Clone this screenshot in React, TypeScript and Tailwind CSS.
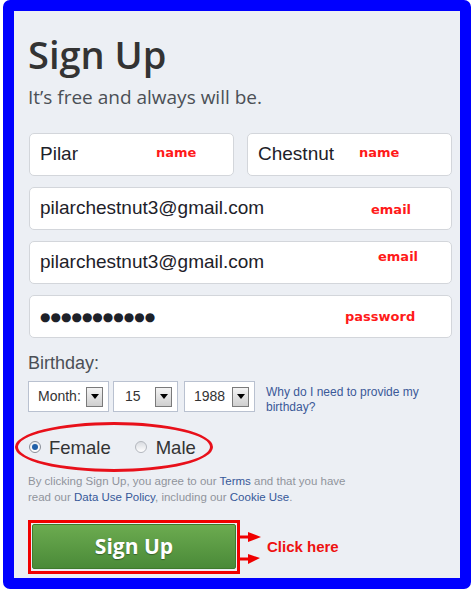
import React from "react";

const sans = { fontFamily: '"Liberation Sans", Arial, sans-serif' };
const open = { fontFamily: '"Open Sans", "Liberation Sans", sans-serif' };
const dv = { fontFamily: '"DejaVu Sans", Verdana, sans-serif' };

function Note({ text, className }: { text: string; className: string }) {
  return (
    <span
      className={"absolute text-[13px] font-bold leading-none text-[#ff1a1a] " + className}
      style={dv}
    >
      {text}
    </span>
  );
}

function Field({ children, note }: { children: React.ReactNode; note?: React.ReactNode }) {
  return (
    <div
      className="relative flex h-[43px] items-center rounded-[5px] border border-[#d3d6db] bg-white pl-[10px] text-[19px] text-[#1d2129]"
      style={sans}
    >
      {children}
      {note}
    </div>
  );
}

function Arrow() {
  return (
    <div className="flex h-[20px] w-[17px] items-center justify-center border border-[#7a7a7a] bg-gradient-to-b from-[#f4f4f4] to-[#cfcfcf]">
      <svg width="8" height="5" viewBox="0 0 8 5">
        <path d="M0 0 L8 0 L4 5 Z" fill="#000" />
      </svg>
    </div>
  );
}

function Select({ label, w, pl }: { label: string; w: string; pl: string }) {
  return (
    <div
      className={"flex h-[31px] items-center justify-between border border-[#b9c1d0] bg-white pr-[5px] text-[14px] text-[#333] " + w + " " + pl}
      style={sans}
    >
      <span>{label}</span>
      <Arrow />
    </div>
  );
}

export default function App() {
  return (
    <div className="h-[591px] w-[474px] bg-white">
      <div className="ml-[3px] h-[589px] w-[468px] rounded-[7px] border-[11px] border-[#0000ff] bg-[#eceff4] pl-[14px] pr-[8px] pt-[24px]">
        <h1 className="text-[38px] font-semibold leading-[38px] text-[#333]" style={open}>
          Sign Up
        </h1>
        <p className="mt-[12px] text-[19px] leading-[24px] text-[#4b4f56]" style={open}>
          It’s free and always will be.
        </p>

        <div className="ml-[1px] mt-[24px] flex flex-col gap-[11px]">
          <div className="flex gap-[13px]">
            <div className="flex-1">
              <Field note={<Note text="name" className="left-[126px] top-[12px]" />}>Pilar</Field>
            </div>
            <div className="flex-1">
              <Field note={<Note text="name" className="left-[111px] top-[12px]" />}>Chestnut</Field>
            </div>
          </div>
          <Field note={<Note text="email" className="left-[341px] top-[15px]" />}>pilarchestnut3@gmail.com</Field>
          <Field note={<Note text="email" className="left-[348px] top-[8px]" />}>pilarchestnut3@gmail.com</Field>
          <Field note={<Note text="password" className="left-[315px] top-[14px]" />}>
            <span className="text-[12px] tracking-[0px]" style={dv}>
              ●●●●●●●●●●●
            </span>
          </Field>
        </div>

        <div className="mt-[14px] text-[18px] leading-[22px] text-[#4b4f56]" style={sans}>
          Birthday:
        </div>

        <div className="mt-[7px] flex items-start">
          <Select label="Month:" w="w-[81px]" pl="pl-[9px]" />
          <div className="ml-[4px]">
            <Select label="15" w="w-[65px]" pl="pl-[11px]" />
          </div>
          <div className="ml-[6px]">
            <Select label="1988" w="w-[71px]" pl="pl-[9px]" />
          </div>
          <div className="ml-[11px] mt-[4px] text-[12px] leading-[15px] text-[#3b5998]" style={sans}>
            Why do I need to provide my
            <br />
            birthday?
          </div>
        </div>

        <div className="relative mt-[18px] flex h-[30px] items-center text-[18.5px] text-[#333]" style={sans}>
          <div className="pointer-events-none absolute left-[-13px] top-[-11px] h-[50px] w-[198px] rounded-[50%] border-[3px] border-[#e8101a]" />
          <div className="mb-[3px] ml-[1px] flex h-[12px] w-[12px] items-center justify-center rounded-full border border-[#8a8f99] bg-gradient-to-b from-[#e9ecf0] to-[#ffffff]">
            <div className="h-[6px] w-[6px] rounded-full bg-[#1f5fa8]" />
          </div>
          <span className="ml-[8px]">Female</span>
          <div className="mb-[3px] ml-[24px] h-[12px] w-[12px] rounded-full border border-[#b3b7be] bg-gradient-to-b from-[#d9dce1] to-[#ffffff]" />
          <span className="ml-[9px]">Male</span>
        </div>

        <p className="mt-[10px] text-[11.5px] leading-[16px] text-[#90949c]" style={sans}>
          By clicking Sign Up, you agree to our <span className="text-[#365899]">Terms</span> and that you have
          <br />
          read our <span className="text-[#365899]">Data Use Policy</span>, including our{" "}
          <span className="text-[#365899]">Cookie Use</span>.
        </p>

        <div className="mt-[15px] flex items-center">
          <div className="h-[54px] w-[212px] border-[3px] border-[#f00000] px-[1px] pt-[1px]">
            <button
              className="flex h-[45px] w-full items-center justify-center rounded-[2px] border border-[#3f7a2d] bg-gradient-to-b from-[#6cab50] to-[#4a8a38] text-[21px] font-bold text-white [text-shadow:0_1px_1px_rgba(0,0,0,0.35)]"
              style={open}
            >
              Sign Up
            </button>
          </div>
          <svg width="24" height="54" viewBox="0 0 24 54" className="shrink-0">
            <path d="M0 17 H9" stroke="#f00000" strokeWidth="3" />
            <path d="M8 12 L21 17 L8 22 Z" fill="#f00000" />
            <path d="M0 39 H9" stroke="#f00000" strokeWidth="3" />
            <path d="M8 34 L20 38 L8 44 Z" fill="#f00000" />
          </svg>
          <span className="ml-[3px] text-[15px] font-bold text-[#ee1111]" style={sans}>
            Click here
          </span>
        </div>
      </div>
    </div>
  );
}
